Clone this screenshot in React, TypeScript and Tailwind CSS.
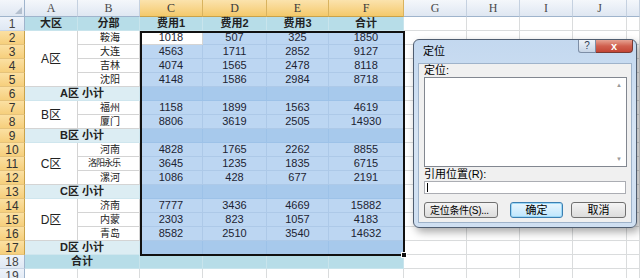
import React from "react";

type DataRow = { city: string; nums: number[]; region?: { label: string; span: string } };

const font = "font-['Liberation_Sans','Noto_Sans_CJK_SC',sans-serif]";
const letters = ["A", "B", "C", "D", "E", "F", "G", "H", "I", "J", ""];

const blocks: { rows: DataRow[]; sub: string }[] = [
  {
    rows: [
      { city: "鞍海", nums: [1018, 507, 325, 1850], region: { label: "A区", span: "row-span-4" } },
      { city: "大连", nums: [4563, 1711, 2852, 9127] },
      { city: "吉林", nums: [4074, 1565, 2478, 8118] },
      { city: "沈阳", nums: [4148, 1586, 2984, 8718] },
    ],
    sub: "A区 小计",
  },
  {
    rows: [
      { city: "福州", nums: [1158, 1899, 1563, 4619], region: { label: "B区", span: "row-span-2" } },
      { city: "厦门", nums: [8806, 3619, 2505, 14930] },
    ],
    sub: "B区 小计",
  },
  {
    rows: [
      { city: "河南", nums: [4828, 1765, 2262, 8855], region: { label: "C区", span: "row-span-3" } },
      { city: "洛阳永乐", nums: [3645, 1235, 1835, 6715] },
      { city: "漯河", nums: [1086, 428, 677, 2191] },
    ],
    sub: "C区 小计",
  },
  {
    rows: [
      { city: "济南", nums: [7777, 3436, 4669, 15882], region: { label: "D区", span: "row-span-3" } },
      { city: "内蒙", nums: [2303, 823, 1057, 4183] },
      { city: "青岛", nums: [8582, 2510, 3540, 14632] },
    ],
    sub: "D区 小计",
  },
];

function RowHead({ n }: { n: number }) {
  const sel = n >= 2 && n <= 17;
  return (
    <div
      className={`flex items-center justify-center border-r border-b text-[12px] leading-none ${
        sel
          ? "bg-gradient-to-b from-[#fbe0a2] to-[#f6cf7c] border-r-[#c9a24a] border-b-[#e5c27a] text-[#333]"
          : "bg-gradient-to-b from-[#eef3fa] to-[#dfe8f4] border-r-[#9fb4cc] border-b-[#c9d5e5] text-[#444]"
      }`}
    >
      {n}
    </div>
  );
}

function Empties() {
  return (
    <>
      {[0, 1, 2, 3, 4].map((i) => (
        <div key={i} className="border-r border-b border-[#dadcdd] bg-white" />
      ))}
    </>
  );
}

function Dialog() {
  return (
    <div className="absolute left-[413px] top-[39px] w-[224px] h-[189px] rounded-[6px] border border-[#4f5d70] bg-gradient-to-b from-[#c3d8ef] via-[#d6e4f4] to-[#cfdff1] shadow-[3px_4px_8px_rgba(0,0,0,0.35)] text-[11px] text-black">
      <div className="flex h-[23px] items-start justify-between">
        <span className="pl-[9px] pt-[5px] leading-[13px]">定位</span>
        <div className="mr-[3px] flex">
          <div className="flex h-[13px] w-[18px] items-center justify-center rounded-bl-[3px] border border-t-0 border-[#7d8ea6] bg-gradient-to-b from-[#eef3f9] to-[#c7d5e6] text-[10px] leading-none text-[#2d3d55]">
            ?
          </div>
          <div className="flex h-[13px] w-[37px] items-center justify-center rounded-br-[4px] border border-l-0 border-t-0 border-[#7a3a33] bg-gradient-to-b from-[#e5a293] via-[#d0604f] to-[#c34535] text-[11px] font-bold leading-none text-white">
            x
          </div>
        </div>
      </div>
      <div className="mx-[4px] h-[160px] border border-[#9fb3ca] bg-[#f0f0f0] px-[5px]">
        <div className="h-[13px] leading-[13px]">定位:</div>
        <div className="flex h-[90px] w-[203px] border border-[#828790] bg-white">
          <div className="flex-1" />
          <div className="flex w-[14px] flex-col items-center justify-between py-[4px] text-[6px] leading-none text-[#9a9a9a]">
            <span>▲</span>
            <span>▼</span>
          </div>
        </div>
        <div className="mt-[1px] h-[13px] leading-[13px]">引用位置(R):</div>
        <div className="flex h-[13px] w-[202px] items-center border border-[#abadb3] bg-white pl-[2px]">
          <div className="h-[9px] w-px bg-black" />
        </div>
        <div className="mt-[8px] flex h-[16px] items-center whitespace-nowrap">
          <div className="flex h-full w-[74px] items-center rounded-[3px] border border-[#707070] bg-gradient-to-b from-[#f4f4f4] to-[#dcdcdc] pl-[5px] text-[10px] tracking-[-0.3px]">
            定位条件(S)...
          </div>
          <div className="ml-[12px] flex h-full w-[53px] items-center justify-center rounded-[3px] border border-[#3c7fb1] bg-gradient-to-b from-[#eaf6fd] to-[#bee6fd] shadow-[inset_0_0_0_1px_#9cd8f7]">
            确定
          </div>
          <div className="ml-[8px] flex h-full w-[55px] items-center justify-center rounded-[3px] border border-[#707070] bg-gradient-to-b from-[#f4f4f4] to-[#dcdcdc]">
            取消
          </div>
        </div>
      </div>
    </div>
  );
}

export default function App() {
  let rowNo = 2;
  const body: React.ReactNode[] = [];

  blocks.forEach((b, bi) => {
    b.rows.forEach((r, ri) => {
      const n = rowNo++;
      body.push(
        <React.Fragment key={`r${n}`}>
          <RowHead n={n} />
          {r.region && (
            <div
              className={`${r.region.span} flex items-center justify-center border-r border-b border-[#d4d4d4] bg-white text-[12px] text-[#222]`}
            >
              {r.region.label}
            </div>
          )}
          <div
            className={`flex items-center justify-end whitespace-nowrap border-r border-b border-[#d4d4d4] bg-white pr-[19px] text-[#222] ${
              r.city.length > 2 ? "text-[9px] tracking-[-1px]" : "text-[10px]"
            }`}
          >
            {r.city}
          </div>
          {r.nums.map((v, i) => (
            <div
              key={i}
              className={`flex items-center justify-center border-r border-b text-[11px] text-[#1d2433] ${
                bi === 0 && ri === 0 && i === 0
                  ? "bg-white border-[#d4d4d4]"
                  : "bg-[#bcd6f2] border-[#adc9e8]"
              }`}
            >
              {v}
            </div>
          ))}
          <Empties />
        </React.Fragment>
      );
    });
    const n = rowNo++;
    body.push(
      <React.Fragment key={`s${n}`}>
        <RowHead n={n} />
        <div className="col-span-2 flex items-center justify-center border-r border-b border-[#cfe6ee] bg-[#dcedf3] text-[11px] font-bold text-[#222]">
          {b.sub}
        </div>
        {[0, 1, 2, 3].map((i) => (
          <div key={i} className="border-r border-b border-[#9dc2e8] bg-[#a7c9ec]" />
        ))}
        <Empties />
      </React.Fragment>
    );
  });

  return (
    <div className={`relative h-[278px] w-[640px] overflow-hidden bg-white ${font}`}>
      <div className="grid grid-cols-[25px_53px_62px_63px_64px_62px_75px_63px_53px_53px_54px_1fr] grid-rows-[17px_repeat(19,14px)]">
        {/* corner */}
        <div className="relative border-r border-b border-[#9fb4cc] bg-gradient-to-b from-[#f3f6fb] to-[#dfe7f2]">
          <div className="absolute bottom-[2px] right-[2px] h-0 w-0 border-b-[7px] border-l-[7px] border-b-[#b4c0cf] border-l-transparent" />
        </div>
        {letters.map((l, i) => {
          const sel = i >= 2 && i <= 5;
          return (
            <div
              key={i}
              className={`flex items-center justify-center border-r border-b font-['Liberation_Serif',serif] text-[12px] leading-none ${
                sel
                  ? "bg-gradient-to-b from-[#fbe3ad] to-[#f4c96a] border-r-[#d9b35f] border-b-[#c9a24a] text-[#3a3a3a]"
                  : "bg-gradient-to-b from-[#f4f7fb] to-[#dfe7f2] border-r-[#c5d1e0] border-b-[#9fb4cc] text-[#4a4a4a]"
              }`}
            >
              {l}
            </div>
          );
        })}

        {/* row 1 */}
        <RowHead n={1} />
        {["大区", "分部", "费用1", "费用2", "费用3", "合计"].map((t) => (
          <div
            key={t}
            className="flex items-center justify-center border-r border-b border-[#c8e4ec] bg-[#b7dde8] text-[11px] font-bold text-[#222]"
          >
            {t}
          </div>
        ))}
        <Empties />

        {body}

        {/* row 18 */}
        <RowHead n={18} />
        <div className="col-span-2 flex items-center justify-center border-r border-b border-[#c8e4ec] bg-[#b7dde8] text-[11px] font-bold text-[#222]">
          合计
        </div>
        {[0, 1, 2, 3].map((i) => (
          <div key={i} className="border-r border-b border-[#c8e4ec] bg-[#b7dde8]" />
        ))}
        <Empties />

        {/* row 19 */}
        <RowHead n={19} />
        {[0, 1, 2, 3, 4, 5].map((i) => (
          <div key={i} className="border-r border-b border-[#dadcdd] bg-white" />
        ))}
        <Empties />
      </div>

      {/* selection outline */}
      <div className="pointer-events-none absolute left-[140px] top-[31px] h-[225px] w-[265px] border-2 border-[#111]" />
      <div className="absolute left-[401px] top-[252px] h-[6px] w-[6px] border border-white bg-[#111]" />

      <Dialog />
    </div>
  );
}
